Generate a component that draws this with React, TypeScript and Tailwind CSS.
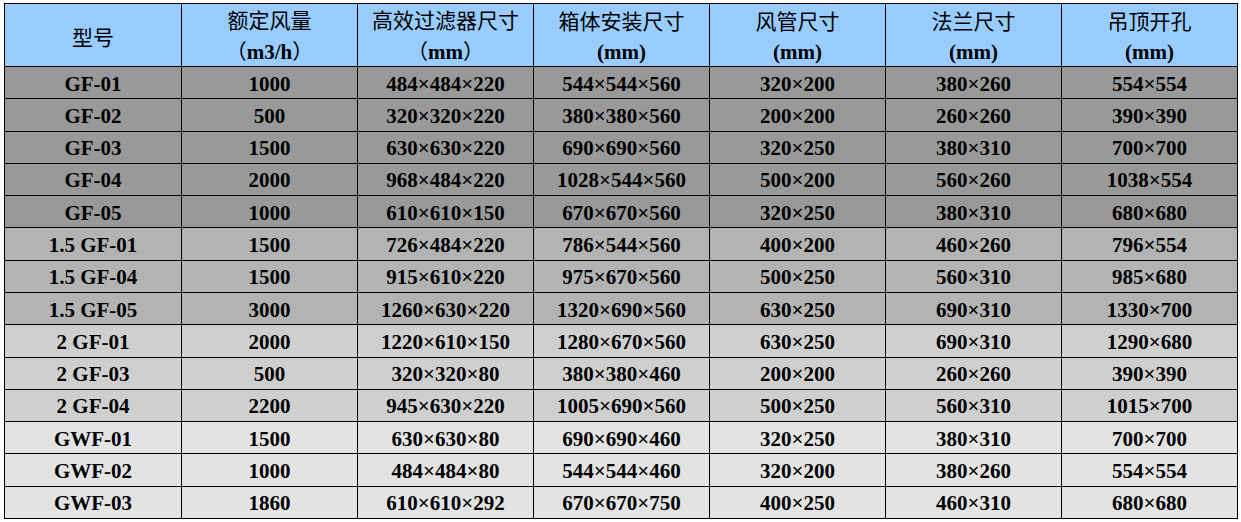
import React from "react";

type Row = { cells: string[]; g: number };

const rows: Row[] = [
  { cells: ["GF-01", "1000", "484×484×220", "544×544×560", "320×200", "380×260", "554×554"], g: 1 },
  { cells: ["GF-02", "500", "320×320×220", "380×380×560", "200×200", "260×260", "390×390"], g: 1 },
  { cells: ["GF-03", "1500", "630×630×220", "690×690×560", "320×250", "380×310", "700×700"], g: 1 },
  { cells: ["GF-04", "2000", "968×484×220", "1028×544×560", "500×200", "560×260", "1038×554"], g: 1 },
  { cells: ["GF-05", "1000", "610×610×150", "670×670×560", "320×250", "380×310", "680×680"], g: 1 },
  { cells: ["1.5 GF-01", "1500", "726×484×220", "786×544×560", "400×200", "460×260", "796×554"], g: 2 },
  { cells: ["1.5 GF-04", "1500", "915×610×220", "975×670×560", "500×250", "560×310", "985×680"], g: 2 },
  { cells: ["1.5 GF-05", "3000", "1260×630×220", "1320×690×560", "630×250", "690×310", "1330×700"], g: 2 },
  { cells: ["2 GF-01", "2000", "1220×610×150", "1280×670×560", "630×250", "690×310", "1290×680"], g: 3 },
  { cells: ["2 GF-03", "500", "320×320×80", "380×380×460", "200×200", "260×260", "390×390"], g: 3 },
  { cells: ["2 GF-04", "2200", "945×630×220", "1005×690×560", "500×250", "560×310", "1015×700"], g: 3 },
  { cells: ["GWF-01", "1500", "630×630×80", "690×690×460", "320×250", "380×310", "700×700"], g: 4 },
  { cells: ["GWF-02", "1000", "484×484×80", "544×544×460", "320×200", "380×260", "554×554"], g: 4 },
  { cells: ["GWF-03", "1860", "610×610×292", "670×670×750", "400×250", "460×310", "680×680"], g: 4 },
];

const bg: Record<number, string> = {
  1: "bg-[#999999]",
  2: "bg-[#b3b3b3]",
  3: "bg-[#cfcfcf]",
  4: "bg-[#e3e3e3]",
};

const cjk = "font-['Noto_Sans_CJK_SC',sans-serif] font-normal";
const lat = "font-['Liberation_Serif','Noto_Sans_CJK_SC',serif] font-bold";

function Head({ top, bottom }: { top: string; bottom?: React.ReactNode }) {
  return (
    <div className="bg-[#99ccff] flex flex-col items-center justify-center pt-[2px] text-[21px] leading-[31px] text-black">
      <div className={cjk}>{top}</div>
      {bottom && <div className="whitespace-pre">{bottom}</div>}
    </div>
  );
}

export default function App() {
  return (
    <div className="w-[1241px] h-[522px] bg-white pt-[3px] pl-[4px]">
      <div className="grid grid-cols-[176px_repeat(6,175px)] grid-rows-[62px_repeat(14,minmax(0,1fr))] gap-px bg-black p-px w-[1234px] h-[516px]">
        <Head top="型号" />
        <Head
          top="额定风量"
          bottom={
            <>
              <span className={cjk}>（</span>
              <span className={lat}>m3/h</span>
              <span className={cjk}>）</span>
            </>
          }
        />
        <Head
          top="高效过滤器尺寸"
          bottom={
            <>
              <span className={cjk}>（</span>
              <span className={lat}>mm</span>
              <span className={cjk}>）</span>
            </>
          }
        />
        <Head top="箱体安装尺寸" bottom={<span className={lat}>(mm)</span>} />
        <Head top="风管尺寸" bottom={<span className={lat}>(mm)</span>} />
        <Head top="法兰尺寸" bottom={<span className={lat}>(mm)</span>} />
        <Head top="吊顶开孔" bottom={<span className={lat}>(mm)</span>} />
        {rows.map((r, i) =>
          r.cells.map((c, j) => (
            <div
              key={`${i}-${j}`}
              className={`${bg[r.g]} ${lat} flex items-center justify-center pt-[3px] text-[21px] leading-none text-black whitespace-pre`}
            >
              {c}
            </div>
          ))
        )}
      </div>
    </div>
  );
}
